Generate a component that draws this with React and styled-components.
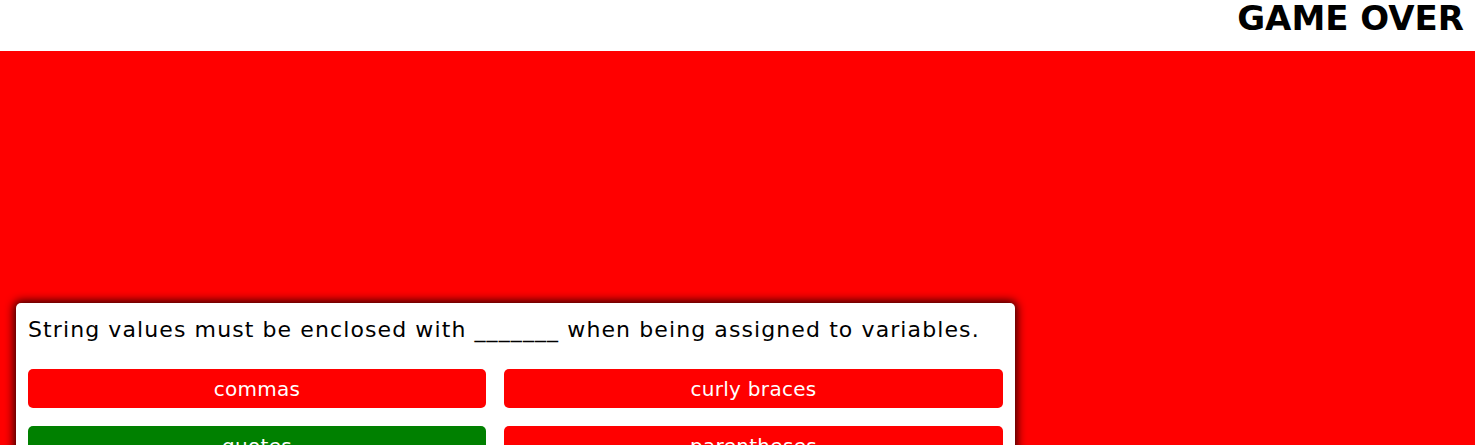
import React from "react";
import styled, { createGlobalStyle } from "styled-components";

const GlobalStyle = createGlobalStyle`
  body {
    margin: 0;
    font-family: "DejaVu Sans", sans-serif;
    background: #ff0000;
  }
`;

const Header = styled.header`
  height: 51px;
  background: #fff;
  display: flex;
  justify-content: flex-end;
  align-items: flex-start;
  padding-right: 11px;
`;

const Title = styled.h1`
  margin: 0;
  font-size: 34px;
  line-height: 36px;
  font-weight: bold;
  color: #000;
`;

const Main = styled.main`
  background: #ff0000;
  min-height: 394px;
  padding: 252px 0 0 16px;
  box-sizing: border-box;
`;

const Card = styled.section`
  width: 999px;
  box-sizing: border-box;
  background: #fff;
  border-radius: 5px;
  box-shadow: 0 0 10px 2px rgba(0, 0, 0, 0.85);
  padding: 11px 12px 16px;
`;

const Question = styled.p`
  margin: 0 0 23px;
  font-size: 22px;
  line-height: 32px;
  letter-spacing: 1.1px;
  color: #000;
  white-space: nowrap;
`;

const Answers = styled.div`
  display: grid;
  grid-template-columns: 458fr 499fr;
  gap: 18px;
`;

const Answer = styled.button`
  height: 39px;
  border: none;
  border-radius: 5px;
  background: ${(p) => (p.$correct ? "#008000" : "#ff0000")};
  color: #fff;
  font-family: inherit;
  font-size: 20px;
  letter-spacing: 0.3px;
  cursor: pointer;
`;

const answers = [
  { text: "commas" },
  { text: "curly braces" },
  { text: "quotes", correct: true },
  { text: "parentheses" },
];

export default function App() {
  return (
    <>
      <GlobalStyle />
      <Header>
        <Title>GAME OVER</Title>
      </Header>
      <Main>
        <Card>
          <Question>
            String values must be enclosed with _______ when being assigned to
            variables.
          </Question>
          <Answers>
            {answers.map((a) => (
              <Answer key={a.text} $correct={a.correct}>
                {a.text}
              </Answer>
            ))}
          </Answers>
        </Card>
      </Main>
    </>
  );
}
